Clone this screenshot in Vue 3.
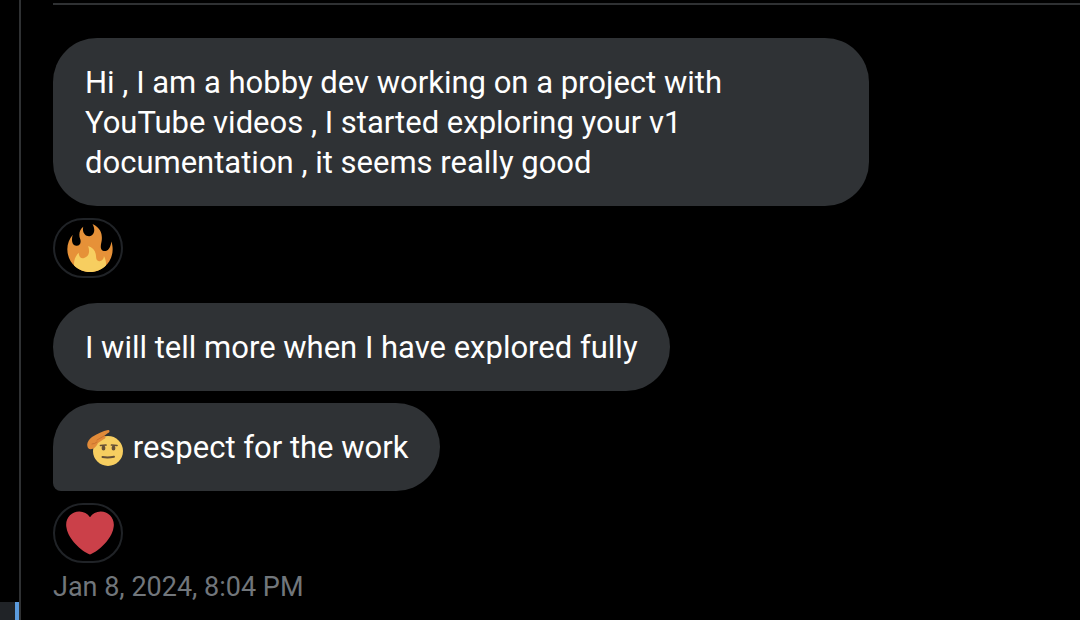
<script setup>
const messages = [
  {
    id: 1,
    text: 'Hi , I am a hobby dev working on a project with YouTube videos , I started exploring your v1 documentation , it seems really good',
    reaction: 'fire',
  },
  { id: 2, text: 'I will tell more when I have explored fully' },
  { id: 3, text: 'respect for the work', salute: true, last: true, reaction: 'heart' },
]
</script>

<template>
  <div class="page">
    <aside class="rail">
      <div class="rail-item"></div>
    </aside>
    <main class="thread">
      <div class="divider"></div>
      <section
        v-for="m in messages"
        :key="m.id"
        class="message"
        :class="{ spaced: m.id === 2 }"
      >
        <p class="bubble" :class="{ tail: m.last }">
          <svg v-if="m.salute" class="inline-emoji" viewBox="0 0 36 36" role="img" aria-label="Saluting face">
            <circle cx="21" cy="21" r="15" fill="#f7ce60" />
            <path d="M13.500 15.500L19 15M24.500 15L30 15.500" fill="none" stroke="#665036" stroke-width="1.700" stroke-linecap="round" />
            <ellipse cx="16.500" cy="18" rx="1.900" ry="2.600" fill="#665036" />
            <ellipse cx="26.500" cy="18" rx="1.900" ry="2.600" fill="#665036" />
            <path d="M15.500 27Q21 28 27 26.700" fill="none" stroke="#665036" stroke-width="2" stroke-linecap="round" />
            <path
              d="M1 18C-1 14 1 10 5 7C10 4 16 1 21 0C23 0 23 2 21 3L17 6C19 6 19 8 17 9L11 13C9 18 4 21 1 18Z"
              fill="#e28b39"
            />
            <path d="M17 6L10 10M5 14Q8 14 10 12" fill="none" stroke="#c9722f" stroke-width="1" stroke-linecap="round" />
          </svg>
          {{ m.text }}
        </p>
        <button v-if="m.reaction" class="reaction" type="button" :aria-label="m.reaction">
          <svg v-if="m.reaction === 'fire'" viewBox="0 0 36 36" aria-hidden="true">
            <path
              fill="#e69138"
              d="M35 19c0-2.062-.367-4.039-1.040-5.868-.46 5.389-3.333 8.157-6.335 6.868-2.812-1.208-.917-5.917-.777-8.164.236-3.809-.012-8.169-6.931-11.794 2.875 5.500.333 8.917-2.333 9.125-2.958.231-5.667-2.542-4.667-7.042-3.238 2.386-3.332 6.402-2.333 9 1.042 2.708-.042 4.958-2.583 5.208-2.840.28-4.418-3.041-2.963-8.333C2.520 10.965 1 14.805 1 19c0 9.389 7.611 17 17 17s17-7.611 17-17z"
            />
            <path
              fill="#f7ce60"
              d="M28.394 23.999c.148 3.084-2.561 4.293-4.019 3.709-2.106-.843-1.541-2.291-2.083-5.291s-2.625-5.083-5.708-6c2.250 6.333-1.247 8.667-3.080 9.084-1.872.426-3.753-.001-3.968-4.007C7.352 23.668 6 26.676 6 30c0 .368.023.73.055 1.090C9.125 34.124 13.342 36 18 36s8.875-1.876 11.945-4.910c.032-.36.055-.722.055-1.090 0-2.187-.584-4.236-1.606-6.001z"
            />
          </svg>
          <svg v-else viewBox="0 0 36 36" aria-hidden="true">
            <path
              fill="#cb4049"
              d="M35.885 11.833c0-5.450-4.418-9.868-9.867-9.868-3.308 0-6.227 1.633-8.018 4.129-1.791-2.496-4.710-4.129-8.017-4.129-5.450 0-9.868 4.417-9.868 9.868 0 .772.098 1.520.266 2.241C1.751 22.587 11.216 31.568 18 34.034c6.783-2.466 16.249-11.447 17.617-19.959.17-.721.268-1.469.268-2.242z"
            />
          </svg>
        </button>
      </section>
      <time class="stamp" datetime="2024-01-08T20:04">Jan 8, 2024, 8:04 PM</time>
    </main>
  </div>
</template>

<style>
body {
  margin: 0;
  background: #000;
}
</style>

<style scoped>
.page {
  display: flex;
  min-height: 100vh;
  background: #000;
  font-family: Roboto, "Liberation Sans", sans-serif;
}
.rail {
  flex: none;
  display: flex;
  align-items: flex-end;
  width: 19px;
  border-right: 2px solid #2f3133;
}
.rail-item {
  flex: 1;
  height: 18px;
  box-sizing: border-box;
  background: #202327;
  border-right: 4px solid #5b9bdd;
}
.thread {
  flex: 1;
  min-width: 0;
  padding: 3px 0 16px 32px;
}
.divider {
  height: 2px;
  margin-bottom: 33px;
  background: #2f3133;
}
.message {
  display: flex;
  flex-direction: column;
  align-items: flex-start;
  gap: 12px;
  margin-bottom: 12px;
}
.spaced {
  margin-top: 25px;
}
.bubble {
  box-sizing: border-box;
  max-width: min(816px, 92%);
  margin: 0;
  padding: 25px 32px 23px;
  border-radius: 44px;
  background: #2f3235;
  color: #fff;
  font-size: 31px;
  line-height: 40px;
}
.tail {
  border-bottom-left-radius: 8px;
}
.inline-emoji {
  width: 36px;
  height: 36px;
  margin: 0 2px;
  vertical-align: -8px;
}
.reaction {
  display: flex;
  box-sizing: border-box;
  width: 70px;
  height: 60px;
  padding: 4px 7px 4px 11px;
  border: 2px solid #202327;
  border-radius: 30px;
  background: #000;
}
.reaction svg {
  width: 48px;
  height: 48px;
}
.stamp {
  display: block;
  color: #71767b;
  font-size: 27px;
  line-height: 24px;
}
</style>
